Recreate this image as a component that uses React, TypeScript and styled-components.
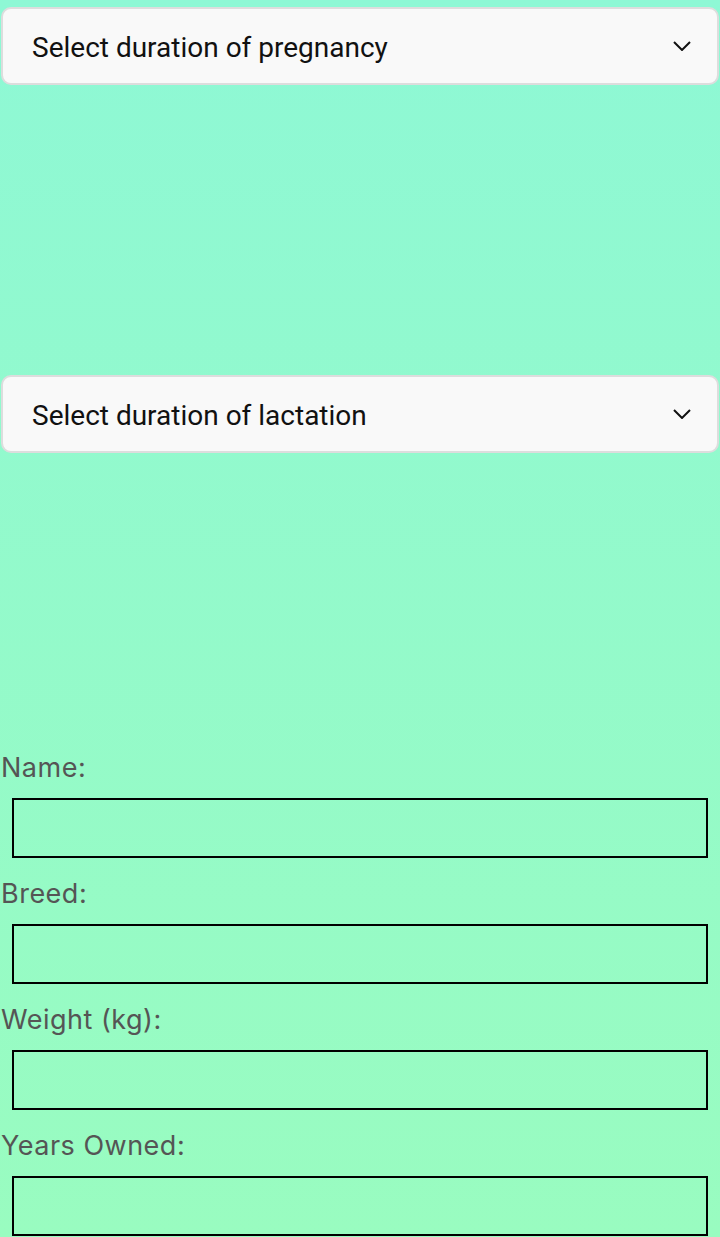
import React from "react";
import styled, { createGlobalStyle } from "styled-components";

const Global = createGlobalStyle`
  html, body { margin: 0; padding: 0; }
  body {
    min-height: 1237px;
    background: linear-gradient(180deg, #8ef8d5 0%, #99fcc0 100%);
  }
`;

const Page = styled.div`
  display: flex;
  flex-direction: column;
  padding-top: 7px;
  min-height: 1230px;
`;

const SelectBox = styled.div<{ $after: number }>`
  display: flex;
  align-items: center;
  justify-content: space-between;
  box-sizing: border-box;
  margin: 0 1px ${(p) => p.$after}px 1px;
  height: 78px;
  padding: 0 26px 0 29px;
  background: #f9f9f9;
  border: 2px solid #dddddd;
  border-radius: 10px;
  font-family: Roboto, "Liberation Sans", sans-serif;
  font-size: 28px;
  line-height: 32px;
  color: #111;
`;

const SelectText = styled.span`
  padding-top: 4px;
`;

const Chevron = () => (
  <svg width="18" height="10" viewBox="0 0 18 10" fill="none">
    <polyline points="1,1 9,9 17,1" stroke="#111" strokeWidth="2" />
  </svg>
);

const Form = styled.div`
  display: flex;
  flex-direction: column;
`;

const Label = styled.label`
  display: block;
  margin-top: 21px;
  padding-left: 1px;
  font-family: Inter, "Noto Sans", sans-serif;
  font-size: 27px;
  line-height: 30px;
  letter-spacing: 0.5px;
  color: #555;
`;

const Input = styled.input`
  box-sizing: border-box;
  margin: 15px 12px 0 12px;
  height: 60px;
  background: transparent;
  border: 2px solid #000;
  outline: none;
  font-size: 20px;
`;

const fields = ["Name:", "Breed:", "Weight (kg):", "Years Owned:"];

export default function App() {
  return (
    <>
      <Global />
      <Page>
        <SelectBox $after={290}>
          <SelectText>Select duration of pregnancy</SelectText>
          <Chevron />
        </SelectBox>
        <SelectBox $after={279}>
          <SelectText>Select duration of lactation</SelectText>
          <Chevron />
        </SelectBox>
        <Form>
          {fields.map((f) => (
            <React.Fragment key={f}>
              <Label>{f}</Label>
              <Input type="text" />
            </React.Fragment>
          ))}
        </Form>
      </Page>
    </>
  );
}
